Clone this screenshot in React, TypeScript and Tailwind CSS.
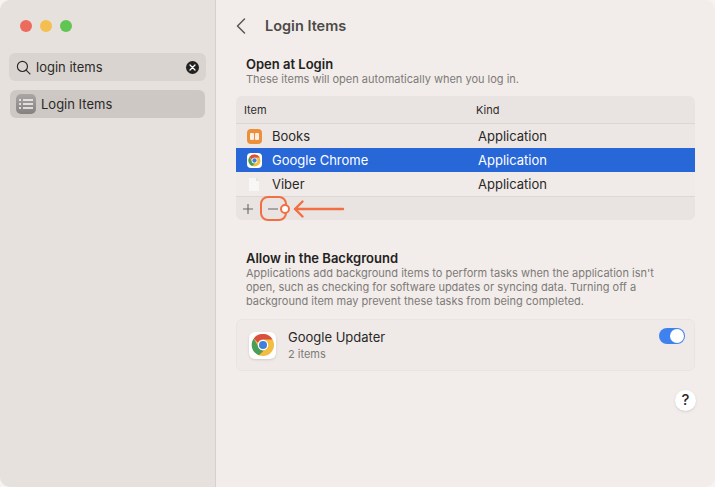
import React from "react";

function Chrome({ size }: { size: number }) {
  return (
    <svg width={size} height={size} viewBox="0 0 48 48">
      <circle cx="24" cy="24" r="22" fill="#f3bd42" />
      <path d="M24 2a22 22 0 0 1 19 11H24a11 11 0 0 0-10 6.5L5.5 11A22 22 0 0 1 24 2z" fill="#d9503f" />
      <path d="M5.5 11L14.5 27a11 11 0 0 0 11 7.9L16 44.5A22 22 0 0 1 5.5 11z" fill="#4a9e58" />
      <circle cx="24" cy="24" r="10.5" fill="#fff" />
      <circle cx="24" cy="24" r="8" fill="#3f80dd" />
    </svg>
  );
}

function Row({ icon, name, selected, alt }: { icon: React.ReactNode; name: string; selected?: boolean; alt?: boolean }) {
  return (
    <div className={`flex h-6 items-center text-[13px] ${selected ? "bg-[#2867d8] text-white" : alt ? "bg-[#f0ebe8] text-[#2a2827]" : "bg-[#ece7e4] text-[#2a2827]"}`}>
      <div className="flex w-9 justify-center">{icon}</div>
      <div className="w-[206px] pt-0.5">{name}</div>
      <div className="pt-0.5">Application</div>
    </div>
  );
}

export default function App() {
  return (
    <div className="h-[487px] w-[715px] overflow-hidden bg-[#f6f3f1] font-['Inter','Liberation_Sans',sans-serif] antialiased">
      <div className="relative flex h-full w-full overflow-hidden rounded-[10px] bg-[#f2edea]">
        <aside className="w-[216px] shrink-0 border-r border-[#d6d1cd] bg-[#e6e1dd] px-[9px]">
          <div className="flex gap-2 pl-[11px] pt-5">
            <span className="h-3 w-3 rounded-full bg-[#ec6a5e]" />
            <span className="h-3 w-3 rounded-full bg-[#f4bf4f]" />
            <span className="h-3 w-3 rounded-full bg-[#61c554]" />
          </div>
          <div className="mt-[21px] flex h-7 items-center rounded-md bg-[#d9d4d0] pl-[7px] pr-[7px] text-[13px] text-[#2b2928]">
            <svg width="15" height="15" viewBox="0 0 14 14" fill="none" stroke="#2b2928" strokeWidth="1.1" strokeLinecap="round">
              <circle cx="6" cy="6" r="4.7" />
              <path d="M9.5 9.5L13 13" />
            </svg>
            <span className="ml-[5px] flex-1 pt-0.5">login items</span>
            <span className="flex h-[13px] w-[13px] items-center justify-center rounded-full bg-[#222]">
              <svg width="7" height="7" viewBox="0 0 7 7" stroke="#fff" strokeWidth="1.3" strokeLinecap="round">
                <path d="M1 1l5 5M6 1L1 6" />
              </svg>
            </span>
          </div>
          <div className="ml-px mt-[9px] flex h-7 w-[195px] items-center rounded-md bg-[#cdc8c4] pl-[6px] text-[13px] text-[#2b2928]">
            <span className="flex h-5 w-5 flex-col justify-center gap-[2.5px] rounded-[5px] bg-gradient-to-b from-[#a9a6a4] to-[#84817f] px-[3px]">
              {[0, 1, 2].map((i) => (
                <span key={i} className="flex items-center gap-[2px]">
                  <span className="h-[1.5px] w-[1.5px] bg-white/70" />
                  <span className="h-[1.5px] flex-1 bg-white/70" />
                </span>
              ))}
            </span>
            <span className="ml-[5px] pt-0.5">Login Items</span>
          </div>
        </aside>

        <main className="relative flex-1 pl-5 pr-5">
          <header className="flex h-[52px] items-center">
            <svg width="10" height="16" viewBox="0 0 10 16" fill="none" stroke="#5a5756" strokeWidth="1.5" strokeLinecap="round" strokeLinejoin="round">
              <path d="M8.5 1L1.5 8l7 7" />
            </svg>
            <h1 className="ml-[19px] text-[14.5px] font-semibold text-[#4c4a49]">Login Items</h1>
          </header>

          <section className="mt-1 pl-2.5">
            <h2 className="text-[13px] font-semibold leading-4 text-[#242221]">Open at Login</h2>
            <p className="text-[11px] leading-[14px] text-[#7d7a78]">These items will open automatically when you log in.</p>
          </section>

          <div className="mt-[10px] w-[459px] overflow-hidden rounded-md">
            <div className="flex h-7 items-center border-b border-[#dad6d2] bg-[#e9e4e1] pt-0.5 text-[11px] text-[#2f2d2c]">
              <div className="w-[240px] pl-2">Item</div>
              <div>Kind</div>
            </div>
            <Row
              name="Books"
              icon={
                <span className="flex h-[15px] w-[15px] items-center justify-center rounded-[4px] bg-[#ec8f3b]">
                  <span className="flex gap-px">
                    <span className="h-[7px] w-[4px] rounded-[1px] bg-[#fdf0e2]" />
                    <span className="h-[7px] w-[4px] rounded-[1px] bg-[#fdf0e2]" />
                  </span>
                </span>
              }
            />
            <Row
              name="Google Chrome"
              selected
              icon={
                <span className="flex h-[15px] w-[15px] items-center justify-center rounded-[4px] bg-white">
                  <Chrome size={13} />
                </span>
              }
            />
            <Row
              name="Viber"
              alt
              icon={
                <svg width="12" height="15" viewBox="0 0 12 15">
                  <path d="M0.5 0.5H8L11.5 4V14.5H0.5z" fill="#f8f7f6" stroke="#e9e6e3" strokeWidth="0.5" />
                  <path d="M8 0.5V4H11.5" fill="#e5e2df" />
                </svg>
              }
            />
            <div className="flex h-6 items-center border-t border-[#dcd8d4] bg-[#e9e4e1] pl-[7px] text-[#5a5756]">
              <svg width="10" height="10" viewBox="0 0 10 10" stroke="#666" strokeWidth="1.1">
                <path d="M5 0v10M0 5h10" />
              </svg>
              <svg className="ml-[15px]" width="10" height="2" viewBox="0 0 10 2" stroke="#666" strokeWidth="1.1">
                <path d="M0 1h10" />
              </svg>
            </div>
          </div>

          <section className="mt-[30px] pl-2.5">
            <h2 className="text-[13px] font-semibold leading-4 text-[#242221]">Allow in the Background</h2>
            <p className="w-[440px] text-[11px] leading-[14px] text-[#7d7a78]">
              Applications add background items to perform tasks when the application isn't open, such as checking for software updates or syncing data. Turning off a background item may prevent these tasks from being completed.
            </p>
          </section>

          <div className="mt-[11px] flex h-[52px] w-[459px] items-center rounded-md border border-[#e8e4e0] bg-[#efeae7] pl-3 pr-[9px]">
            <span className="flex h-[27px] w-[27px] items-center justify-center rounded-[6px] bg-white shadow-sm">
              <Chrome size={24} />
            </span>
            <div className="ml-3 flex-1">
              <div className="text-[13px] leading-4 text-[#2a2827]">Google Updater</div>
              <div className="mt-0.5 text-[11px] leading-[14px] text-[#7d7a78]">2 items</div>
            </div>
            <span className="mb-[18px] flex h-4 w-[26px] items-center justify-end rounded-full bg-[#3f82ef] p-px">
              <span className="h-[14px] w-[14px] rounded-full bg-white" />
            </span>
          </div>

          <div className="absolute left-[459px] top-[390px] flex h-[21px] w-[21px] items-center justify-center rounded-full bg-white text-[15px] font-medium text-[#2a2827] shadow-sm">
            ?
          </div>

          {/* annotation */}
          <div className="absolute left-[44px] top-[196px] h-[25px] w-[27px] rounded-[8px] border-[2.5px] border-[#f26f43]" />
          <span className="absolute left-[64px] top-[204px] h-[10px] w-[10px] rounded-full border-[2.5px] border-[#f26f43] bg-white" />
          <svg className="absolute left-[77px] top-[200px]" width="52" height="18" viewBox="0 0 52 18" fill="none" stroke="#f26f43" strokeWidth="2.4" strokeLinecap="round" strokeLinejoin="round">
            <path d="M50 9H2M9.5 1.5L2 9l7.5 7.5" />
          </svg>
        </main>
      </div>
    </div>
  );
}
